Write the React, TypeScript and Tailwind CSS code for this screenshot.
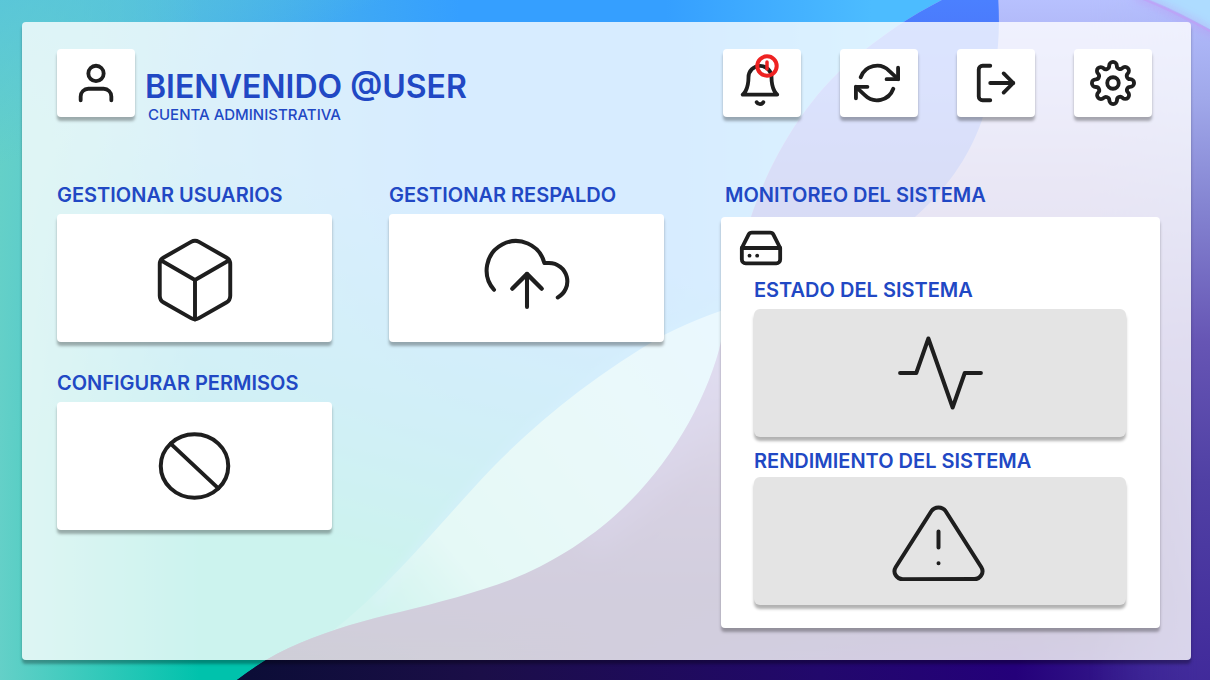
import type { ReactNode } from "react";
import {
  FiBell,
  FiBox,
  FiHardDrive,
  FiLogOut,
  FiRefreshCw,
  FiSettings,
  FiUploadCloud,
  FiUser,
} from "react-icons/fi";

const SHADOW = "shadow-[0_4px_3px_rgba(0,0,0,0.3)]";

function Backdrop() {
  const shell =
    "M237 680 C258 664 278 652 300 643 C333 629 365 620 400 612 C437 603 478 592 510 580 C553 563 585 541 610 520 C665 473 703 408 719 350 C731 300 738 255 751 217 C770 160 805 100 850 62 C884 33 920 10 952 -5 L1215 -5 L1215 690 L225 690 Z";
  return (
    <svg
      aria-hidden="true"
      className="absolute inset-0 h-full w-full"
      viewBox="0 0 1210 680"
      preserveAspectRatio="none"
    >
      <defs>
        <linearGradient id="sky" x1="0" y1="0" x2="1" y2="0">
          <stop offset="0" stopColor="#58c6dc" />
          <stop offset="0.17" stopColor="#4cb6e6" />
          <stop offset="0.38" stopColor="#359fff" />
          <stop offset="0.55" stopColor="#359fff" />
          <stop offset="0.72" stopColor="#4cbcff" />
        </linearGradient>
        <linearGradient id="aqua" gradientUnits="userSpaceOnUse" x1="400" y1="200" x2="300" y2="600">
          <stop offset="0" stopColor="#10b0d8" stopOpacity="0" />
          <stop offset="0.5" stopColor="#10b2cf" stopOpacity="0.8" />
          <stop offset="0.85" stopColor="#00c2ac" />
        </linearGradient>
        <linearGradient id="mint" gradientUnits="userSpaceOnUse" x1="0" y1="0" x2="200" y2="0">
          <stop offset="0" stopColor="#64d0c8" />
          <stop offset="0.3" stopColor="#64d0c8" stopOpacity="0.7" />
          <stop offset="1" stopColor="#64d0c8" stopOpacity="0" />
        </linearGradient>
        <linearGradient id="corner" gradientUnits="userSpaceOnUse" x1="0" y1="0" x2="60" y2="140">
          <stop offset="0" stopColor="#58c4dc" stopOpacity="0.8" />
          <stop offset="1" stopColor="#58c4dc" stopOpacity="0" />
        </linearGradient>
        <linearGradient id="leaf" gradientUnits="userSpaceOnUse" x1="370" y1="600" x2="700" y2="330">
          <stop offset="0" stopColor="#60d8be" stopOpacity="0.35" />
          <stop offset="0.22" stopColor="#7cdfd2" />
          <stop offset="0.6" stopColor="#92e2e0" />
          <stop offset="1" stopColor="#98dcf8" />
        </linearGradient>
        <linearGradient id="shell" x1="0" y1="0" x2="0" y2="1">
          <stop offset="0" stopColor="#b8c2ff" />
          <stop offset="0.12" stopColor="#a8acee" />
          <stop offset="0.28" stopColor="#9185cd" />
          <stop offset="0.5" stopColor="#6c5cb8" />
          <stop offset="0.72" stopColor="#34186e" />
          <stop offset="0.86" stopColor="#1e0a58" />
          <stop offset="1" stopColor="#1a0b4c" />
        </linearGradient>
        <linearGradient id="floor" gradientUnits="userSpaceOnUse" x1="237" y1="0" x2="1210" y2="0">
          <stop offset="0" stopColor="#0b0d36" />
          <stop offset="0.25" stopColor="#1b0e48" />
          <stop offset="0.6" stopColor="#22086c" />
          <stop offset="0.8" stopColor="#24007a" />
          <stop offset="1" stopColor="#402c98" />
        </linearGradient>
        <linearGradient id="floorFade" x1="0" y1="0" x2="0" y2="1">
          <stop offset="0.88" stopColor="#fff" stopOpacity="0" />
          <stop offset="0.975" stopColor="#fff" />
        </linearGradient>
        <mask id="floorMask">
          <rect width="1210" height="680" fill="url(#floorFade)" />
        </mask>
        <linearGradient id="edge" x1="0" y1="0" x2="0" y2="1">
          <stop offset="0" stopColor="#b4bfff" />
          <stop offset="0.15" stopColor="#a0a8ea" />
          <stop offset="0.3" stopColor="#8585d2" />
          <stop offset="0.5" stopColor="#6655b4" />
          <stop offset="0.7" stopColor="#5040a4" />
          <stop offset="1" stopColor="#40299a" />
        </linearGradient>
        <linearGradient id="edgeFade" x1="0" y1="0" x2="1" y2="0">
          <stop offset="0.9" stopColor="#fff" stopOpacity="0" />
          <stop offset="0.99" stopColor="#fff" />
        </linearGradient>
        <mask id="edgeMask">
          <rect width="1210" height="680" fill="url(#edgeFade)" />
        </mask>
        <linearGradient id="petal" gradientUnits="userSpaceOnUse" x1="0" y1="0" x2="0" y2="420">
          <stop offset="0" stopColor="#4b80ff" />
          <stop offset="0.2" stopColor="#4a70f6" />
          <stop offset="0.5" stopColor="#3c50d0" />
          <stop offset="1" stopColor="#7a68c4" />
        </linearGradient>
        <clipPath id="shellClip">
          <path d={shell} />
        </clipPath>
        <filter id="soft" x="-20%" y="-20%" width="140%" height="140%">
          <feGaussianBlur stdDeviation="5" />
        </filter>
        <filter id="haze" x="-20%" y="-20%" width="140%" height="140%">
          <feGaussianBlur stdDeviation="14" />
        </filter>
      </defs>
      <rect width="1210" height="680" fill="url(#sky)" />
      <rect width="1210" height="680" fill="url(#aqua)" />
      <rect width="1210" height="680" fill="url(#mint)" />
      <rect width="1210" height="680" fill="url(#corner)" />
      <path d="M375 605 C450 510 545 400 664 335 C720 307 770 290 800 280" fill="none" stroke="#38b2ff" strokeWidth="10" opacity="0.5" filter="url(#soft)" />
      <path d="M320 640 C385 595 450 510 500 460 C545 415 600 372 664 335 C700 317 740 303 790 290 L790 500 L500 600 Z" fill="url(#leaf)" />
      <path d={shell} fill="url(#shell)" />
      <path d={shell} fill="url(#floor)" mask="url(#floorMask)" />
      <path d={shell} fill="url(#edge)" mask="url(#edgeMask)" />
      <g clipPath="url(#shellClip)">
        <path d="M998 -5 C1001 40 997 75 982 120 C968 160 945 190 915 217 C850 280 780 300 725 350 L700 200 L850 -5 Z" fill="url(#petal)" />
        <path d="M585 541 C595 535 603 527 610 520 C665 473 703 408 719 350" fill="none" stroke="#5a48c0" strokeWidth="30" opacity="0.4" filter="url(#haze)" />
      </g>
      <path d="M1135 -6 C1165 5 1190 18 1215 32 L1215 -6 Z" fill="#aedcff" />
      <path d="M1135 -4 C1165 7 1190 20 1215 34" fill="none" stroke="#bd90f0" strokeWidth="4" opacity="0.7" filter="url(#soft)" />
      <path d="M1135 -4 C1165 7 1190 20 1215 34" fill="none" stroke="#bfa0f6" strokeWidth="2" opacity="0.7" />
    </svg>
  );
}

function WideIcon({ className, children }: { className: string; children: ReactNode }) {
  return (
    <svg
      aria-hidden="true"
      className={`${className} [&_*]:[vector-effect:non-scaling-stroke]`}
      viewBox="0 0 24 24"
      preserveAspectRatio="none"
      fill="none"
      stroke="currentColor"
      strokeWidth="4"
      strokeLinecap="round"
      strokeLinejoin="round"
    >
      {children}
    </svg>
  );
}

function IconButton({ label, children }: { label: string; children: ReactNode }) {
  return (
    <button
      type="button"
      aria-label={label}
      className={`flex h-[68px] w-[78px] shrink-0 items-center justify-center rounded bg-white ${SHADOW}`}
    >
      {children}
    </button>
  );
}

function Heading({ id, children }: { id: string; children: ReactNode }) {
  return (
    <h2 id={id} className="text-[20px] leading-6 font-semibold whitespace-nowrap text-[#2148c4]">
      {children}
    </h2>
  );
}

function ActionCard({ id, title, children }: { id: string; title: string; children: ReactNode }) {
  return (
    <section>
      <Heading id={id}>{title}</Heading>
      <button
        type="button"
        aria-labelledby={id}
        className={`mt-[7px] flex h-32 w-full items-center justify-center rounded bg-white ${SHADOW}`}
      >
        {children}
      </button>
    </section>
  );
}

function StatusCard({ id, children }: { id: string; children: ReactNode }) {
  return (
    <button
      type="button"
      aria-labelledby={id}
      className={`flex h-32 w-full items-center justify-center rounded-md bg-[#e4e4e4] ${SHADOW}`}
    >
      {children}
    </button>
  );
}

export default function App() {
  return (
    <div className="relative flex min-h-screen overflow-hidden pt-[22px] pr-[19px] pb-5 pl-[22px] font-['Inter',sans-serif] text-[#1e1e1e]">
      <Backdrop />
      <main className={`relative flex-1 rounded bg-white/80 pt-[27px] pr-[31px] pb-8 pl-[35px] ${SHADOW}`}>
        <header className="flex items-start justify-between pr-2">
          <div className="flex">
            <IconButton label="Perfil">
              <FiUser size={46} />
            </IconButton>
            <div className="pt-[18px] pl-[10px] text-[#2148c4]">
              <h1 className="text-[32px] leading-10 font-semibold whitespace-nowrap">BIENVENIDO @USER</h1>
              <p className="pl-[3px] text-[15px] leading-4 font-medium">CUENTA ADMINISTRATIVA</p>
            </div>
          </div>
          <nav className="flex gap-[39px]">
            <IconButton label="Notificaciones">
              <span className="relative pt-1 pr-1">
                <FiBell size={46} />
                <svg
                  aria-hidden="true"
                  className="absolute -top-1 left-[18px] h-6 w-6"
                  viewBox="0 0 24 24"
                  fill="none"
                  stroke="#ee2222"
                  strokeWidth="4"
                  strokeLinecap="round"
                >
                  <circle cx="12" cy="12" r="9.7" />
                  <path d="M12 8v7" strokeWidth="3.5" />
                </svg>
              </span>
            </IconButton>
            <IconButton label="Actualizar">
              <span className="pr-1">
                <FiRefreshCw size={46} />
              </span>
            </IconButton>
            <IconButton label="Cerrar sesión">
              <FiLogOut size={46} />
            </IconButton>
            <IconButton label="Configuración">
              <FiSettings size={46} />
            </IconButton>
          </nav>
        </header>

        <div className="mt-[60px] grid grid-cols-[275fr_275fr_439fr] gap-x-[57px]">
          <div className="flex flex-col gap-[29px]">
            <ActionCard id="usuarios" title="GESTIONAR USUARIOS">
              <span className="pt-1">
                <FiBox size={94} strokeWidth={1} />
              </span>
            </ActionCard>
            <ActionCard id="permisos" title="CONFIGURAR PERMISOS">
              <WideIcon className="h-[76px] w-[81px]">
                <circle cx="12" cy="12" r="10" />
                <path d="M4.93 4.93l14.14 14.14" />
              </WideIcon>
            </ActionCard>
          </div>
          <ActionCard id="respaldo" title="GESTIONAR RESPALDO">
            <span className="pb-2">
              <FiUploadCloud size={88} strokeWidth={1.1} />
            </span>
          </ActionCard>
          <section>
            <div className="pl-1">
              <Heading id="monitoreo">MONITOREO DEL SISTEMA</Heading>
            </div>
            <div className={`mt-[10px] rounded bg-white pt-2 pr-[34px] pb-[23px] pl-[33px] ${SHADOW}`}>
              <FiHardDrive size={46} className="-ml-4" />
              <div className="mt-[7px] mb-[7px]">
                <Heading id="estado">ESTADO DEL SISTEMA</Heading>
              </div>
              <StatusCard id="estado">
                <WideIcon className="h-[92px] w-[97px]">
                  <path d="M22 12h-4l-3 9L9 3l-3 9H2" />
                </WideIcon>
              </StatusCard>
              <div className="mt-3 mb-1">
                <Heading id="rendimiento">RENDIMIENTO DEL SISTEMA</Heading>
              </div>
              <StatusCard id="rendimiento">
                <span className="pt-1 pr-1">
                  <WideIcon className="h-[95px] w-[101px]">
                    <path d="M10.29 3.86L1.82 18a2 2 0 0 0 1.71 3h16.94a2 2 0 0 0 1.71-3L13.71 3.86a2 2 0 0 0-3.42 0z" />
                    <path d="M12 9v4M12 17h.01" />
                  </WideIcon>
                </span>
              </StatusCard>
            </div>
          </section>
        </div>
      </main>
    </div>
  );
}
